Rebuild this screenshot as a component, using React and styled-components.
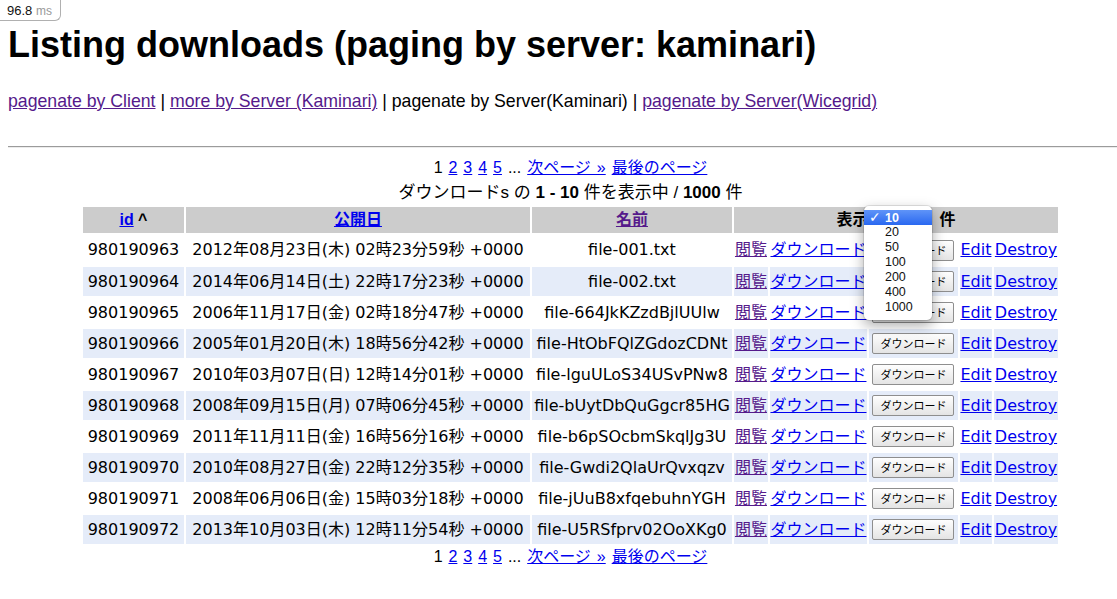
import React from 'react';
import styled, { createGlobalStyle } from 'styled-components';

const GlobalStyle = createGlobalStyle`
  html, body { margin: 0; padding: 0; overflow: hidden; background: #fff; }
  body { font-family: "Liberation Sans", "Noto Sans CJK JP", sans-serif; color: #000; }
`;

const Page = styled.div`
  width: 1125px;
  padding: 0 8px;
`;

const Timing = styled.div`
  position: fixed;
  top: 0;
  left: 0;
  height: 21px;
  box-sizing: border-box;
  padding: 2px 8px 0 7px;
  border: 1px solid #b0b0b0;
  border-top: 0;
  border-left: 0;
  border-bottom-right-radius: 6px;
  background: #fff;
  font: 13px/17px "Liberation Sans", sans-serif;
  color: #111;
`;

const Unit = styled.span`
  color: #999;
  font-size: 12px;
`;

const Title = styled.h1`
  margin: 24px 0 0;
  font: bold 36px/41px "Liberation Sans", "Noto Sans CJK JP", sans-serif;
`;

const Nav = styled.p`
  margin: 26px 0 0;
  font-size: 17.7px;
  line-height: 20px;
`;

const Link = styled.a`
  color: ${p => (p.$visited ? '#551a8b' : '#0000ee')};
  text-decoration: underline;
  cursor: pointer;
`;

const Divider = styled.hr`
  margin: 35px 0 0;
  height: 0;
  border: 0;
  border-top: 1px solid #9b9b9b;
  border-bottom: 1px solid #ececec;
`;

const Pager = styled.div`
  margin-top: ${p => p.$top}px;
  text-align: center;
  font-size: 16px;
  line-height: 18px;
  word-spacing: 1.5px;
`;

const Summary = styled.div`
  margin-top: 6px;
  text-align: center;
  font-size: 17px;
  line-height: 19px;
`;

const Table = styled.table`
  margin: 3px auto 0;
  width: 979px;
  table-layout: fixed;
  border-spacing: 2px;
`;

const Col = styled.col`
  width: ${p => p.$w}px;
`;

const HeadCell = styled.th`
  position: relative;
  height: 26px;
  padding: 0;
  background: #cccccc;
  font: bold 16px/18px "Liberation Sans", "Noto Sans CJK JP", sans-serif;
  text-align: center;
`;

const Row = styled.tr`
  & > td {
    height: ${p => (p.$first ? 30 : 29)}px;
    background: ${p => (p.$alt ? '#e5ecf9' : '#ffffff')};
  }
`;

const Cell = styled.td`
  padding: 0;
  font: 16px/18px "DejaVu Sans", "Noto Sans CJK JP", sans-serif;
  text-align: center;
  white-space: nowrap;
  overflow: visible;
`;

const DownloadButton = styled.button`
  height: 21px;
  padding: 0 7px;
  border: 1px solid #8e8e8e;
  border-radius: 2px;
  background: linear-gradient(#fefefe, #e4e4e4);
  color: #000;
  font: 11px/19px "Noto Sans CJK JP", sans-serif;
  vertical-align: middle;
`;

const SelectBox = styled.span`
  display: inline-block;
  width: 62px;
  height: 18px;
  vertical-align: middle;
`;

const Menu = styled.ul`
  position: absolute;
  left: 130px;
  top: -1px;
  width: 68px;
  margin: 0;
  padding: 4px 0 5px;
  list-style: none;
  background: #fff;
  border-radius: 5px;
  box-shadow: 0 0 0 1px rgba(0, 0, 0, 0.1), 0 5px 14px rgba(0, 0, 0, 0.35);
  font: 12.5px/15px "Liberation Sans", sans-serif;
  text-align: left;
  z-index: 5;
`;

const MenuItem = styled.li`
  height: 15px;
  padding-left: 5px;
  color: ${p => (p.$selected ? '#fff' : '#111')};
  background: ${p => (p.$selected ? 'linear-gradient(#5f94f8, #2a68f0)' : 'transparent')};
  font-weight: ${p => (p.$selected ? 700 : 400)};
`;

const Check = styled.span`
  display: inline-block;
  width: 16px;
  font: bold 14px/15px "DejaVu Sans", sans-serif;
`;

const rows = [
  ['980190963', '2012年08月23日(木) 02時23分59秒 +0000', 'file-001.txt'],
  ['980190964', '2014年06月14日(土) 22時17分23秒 +0000', 'file-002.txt'],
  ['980190965', '2006年11月17日(金) 02時18分47秒 +0000', 'file-664JkKZzdBjlUUlw'],
  ['980190966', '2005年01月20日(木) 18時56分42秒 +0000', 'file-HtObFQlZGdozCDNt'],
  ['980190967', '2010年03月07日(日) 12時14分01秒 +0000', 'file-lguULoS34USvPNw8'],
  ['980190968', '2008年09月15日(月) 07時06分45秒 +0000', 'file-bUytDbQuGgcr85HG'],
  ['980190969', '2011年11月11日(金) 16時56分16秒 +0000', 'file-b6pSOcbmSkqlJg3U'],
  ['980190970', '2010年08月27日(金) 22時12分35秒 +0000', 'file-Gwdi2QlaUrQvxqzv'],
  ['980190971', '2008年06月06日(金) 15時03分18秒 +0000', 'file-jUuB8xfqebuhnYGH'],
  ['980190972', '2013年10月03日(木) 12時11分54秒 +0000', 'file-U5RSfprv02OoXKg0'],
];

const perPage = ['10', '20', '50', '100', '200', '400', '1000'];

const colWidths = [101, 344, 200, 34, 97, 89, 32, 64];

function Pagination({ top }) {
  return (
    <Pager $top={top}>
      1 <Link>2</Link> <Link>3</Link> <Link>4</Link> <Link>5</Link> ...{' '}
      <Link>次ページ »</Link> <Link>最後のページ</Link>
    </Pager>
  );
}

export default function App() {
  return (
    <>
      <GlobalStyle />
      <Timing>
        96.8 <Unit>ms</Unit>
      </Timing>
      <Page>
        <Title>Listing downloads (paging by server: kaminari)</Title>
        <Nav>
          <Link $visited>pagenate by Client</Link> | <Link $visited>more by Server (Kaminari)</Link> |
          pagenate by Server(Kaminari) | <Link $visited>pagenate by Server(Wicegrid)</Link>
        </Nav>
        <Divider />
        <Pagination top={11} />
        <Summary>
          ダウンロードs の <b>1&nbsp;-&nbsp;10</b> 件を表示中 / <b>1000</b> 件
        </Summary>
        <Table>
          <colgroup>
            {colWidths.map((w, i) => (
              <Col key={i} $w={w} />
            ))}
          </colgroup>
          <thead>
            <tr>
              <HeadCell>
                <Link>id</Link> ^
              </HeadCell>
              <HeadCell>
                <Link>公開日</Link>
              </HeadCell>
              <HeadCell>
                <Link $visited>名前</Link>
              </HeadCell>
              <HeadCell colSpan={5}>
                表示 <SelectBox /> 件
                <Menu>
                  {perPage.map((v, i) => (
                    <MenuItem key={v} $selected={i === 0}>
                      <Check>{i === 0 ? '✓' : ''}</Check>
                      {v}
                    </MenuItem>
                  ))}
                </Menu>
              </HeadCell>
            </tr>
          </thead>
          <tbody>
            {rows.map(([id, date, name], i) => (
              <Row key={id} $alt={i % 2 === 1} $first={i === 0}>
                <Cell>{id}</Cell>
                <Cell>{date}</Cell>
                <Cell>{name}</Cell>
                <Cell>
                  <Link $visited>閲覧</Link>
                </Cell>
                <Cell>
                  <Link>ダウンロード</Link>
                </Cell>
                <Cell>
                  <DownloadButton>ダウンロード</DownloadButton>
                </Cell>
                <Cell>
                  <Link>Edit</Link>
                </Cell>
                <Cell>
                  <Link>Destroy</Link>
                </Cell>
              </Row>
            ))}
          </tbody>
        </Table>
        <Pagination top={2} />
      </Page>
    </>
  );
}
